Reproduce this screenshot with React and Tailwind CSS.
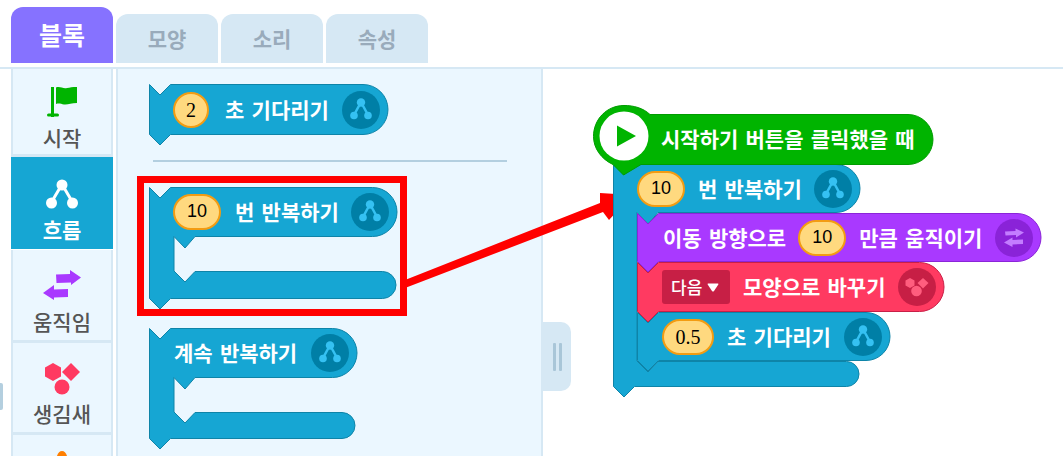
const KR = `font-['Noto_Sans_CJK_KR','Noto_Sans',sans-serif]`;

function stackPath(w, h) {
  const r = (h - 1) / 2;
  return `M.5 .5L11 11L21.5 .5H${w - r}A${r} ${r} 0 0 1 ${w - r} ${h - 0.5}H21.5L11 ${h + 10}L.5 ${h - 0.5}Z`;
}

function loopPath(w, head, ix, innerH, armW, armH) {
  const r = (head - 1) / 2;
  const a = (armH - 1) / 2;
  const ib = head + innerH;
  const ab = ib + armH;
  return `M.5 .5L11 11L21.5 .5H${w - r}A${r} ${r} 0 0 1 ${w - r} ${head - 0.5}H${ix + 21}L${ix + 11} ${head + 11}L${ix} ${head - 0.5}V${ib}L${ix + 11} ${ib + 11}L${ix + 21} ${ib + 0.5}H${armW - a}A${a} ${a} 0 0 1 ${armW - a} ${ab - 0.5}H21.5L11 ${ab + 10}L.5 ${ab - 0.5}Z`;
}

function BlockSvg({ d, fill, stroke, className = "" }) {
  return (
    <svg className={`absolute left-0 top-0 overflow-visible ${className}`} width="1" height="1">
      <path d={d} fill={fill} stroke={stroke} strokeWidth="1" strokeLinejoin="round" />
    </svg>
  );
}

function Pill({ children, w, serif }) {
  return (
    <span className={`flex h-[36px] items-center justify-center rounded-full border-2 border-[#f39c12] bg-[#ffd97f] text-black ${w} ${serif ? "font-['Liberation_Serif',serif] text-[20px]" : "font-['Liberation_Sans',sans-serif] text-[18px]"}`}>
      {children}
    </span>
  );
}

function Label({ children, className = "" }) {
  return (
    <span className={`whitespace-nowrap text-[21px] font-bold [word-spacing:2.5px] text-white ${className}`}>
      {children}
    </span>
  );
}

function FlowGlyph({ color = "#35c1f2", size = 38 }) {
  return (
    <svg width={size} height={size} viewBox="0 0 38 38">
      <path d="M18.5 12L12 24M19.5 12L26 24" stroke={color} strokeWidth="2.5" fill="none" />
      <circle cx="19" cy="11.5" r="4.2" fill={color} />
      <circle cx="12" cy="24.5" r="3.8" fill={color} />
      <circle cx="26" cy="24.5" r="3.8" fill={color} />
    </svg>
  );
}

function FlowIcon() {
  return (
    <span className="ml-auto mr-[8px] flex h-[38px] w-[38px] shrink-0 rounded-full bg-[#007fa6]">
      <FlowGlyph />
    </span>
  );
}

const WIDTHS = { "w-[239px]": 239, "w-[404px]": 404, "w-[307px]": 307, "w-[253px]": 253 };
const HEIGHTS = { "h-[51px]": 51, "h-[49px]": 49, "h-[50px]": 50 };

function Stack({ w, h, fill, stroke, z, children }) {
  return (
    <div className={`relative flex items-center ${w} ${h} ${z}`}>
      <BlockSvg d={stackPath(WIDTHS[w], HEIGHTS[h])} fill={fill} stroke={stroke} />
      <div className="relative flex w-full items-center">{children}</div>
    </div>
  );
}

function Loop({ w, h, d, head, children, inner }) {
  return (
    <div className={`relative ${w} ${h}`}>
      <div className="absolute left-[24px] top-[49px] flex flex-col">{inner}</div>
      <BlockSvg d={d} fill="#16a6d3" stroke="#0e84a8" />
      <div className={`relative flex w-full items-center ${head}`}>{children}</div>
    </div>
  );
}

function PanelBlocks() {
  return (
    <div className="flex flex-col pl-[31px] pt-[15px]">
      <Stack w="w-[239px]" h="h-[51px]" fill="#16a6d3" stroke="#0e84a8" z="">
        <span className="ml-[24px]"><Pill w="w-[36px]" serif>2</Pill></span>
        <Label className="ml-[16px]">초 기다리기</Label>
        <FlowIcon />
      </Stack>
      <div className="ml-[4px] mt-[25px] h-[1.5px] w-[354px] bg-[#b3cfe0]" />
      <div className="mt-[25px]">
        <Loop w="w-[248px]" h="h-[112px]" head="h-[50px]" d={loopPath(248, 50, 25, 34, 247, 28)}>
          <span className="ml-[24px]"><Pill w="w-[48px]">10</Pill></span>
          <Label className="ml-[14px]">번 반복하기</Label>
          <FlowIcon />
        </Loop>
      </div>
      <div className="mt-[29px]">
        <Loop w="w-[208px]" h="h-[111px]" head="h-[50px]" d={loopPath(208, 50, 25, 34, 206, 27)}>
          <Label className="ml-[25px]">계속 반복하기</Label>
          <FlowIcon />
        </Loop>
      </div>
    </div>
  );
}

function Script() {
  return (
    <div className="absolute left-[50px] top-[36px] flex w-[450px] flex-col">
      <div className="relative z-20 h-[59px] w-[340px]">
        <svg className="absolute left-0 top-0 overflow-visible" width="1" height="1">
          <path d="M31 .5C41 .5 50 3 57 9.5H315A25 25 0 0 1 315 59.5H48L30.5 70L20 59.5C8 54 .5 43 .5 31.5C.5 14 14 .5 31 .5Z" fill="#00b400" stroke="#009c00" />
          <circle cx="31" cy="31" r="24.5" fill="#fff" />
          <path d="M24 20.5L43 31L24 41.5Z" fill="#00b400" />
        </svg>
        <div className="relative flex h-[68px] items-center">
          <Label className="ml-[68px]">시작하기 버튼을 클릭했을 때</Label>
        </div>
      </div>
      <div className="relative z-10 ml-[20px]">
        <Loop
          w="w-[247px]"
          h="h-[223px]"
          head="h-[49px]"
          d={loopPath(247, 49, 24, 148, 246, 26)}
          inner={
            <>
              <Stack w="w-[404px]" h="h-[49px]" fill="#a939ff" stroke="#8b25d8" z="z-30">
                <Label className="ml-[26px]">이동 방향으로</Label>
                <span className="ml-[12px]"><Pill w="w-[48px]">10</Pill></span>
                <Label className="ml-[13px]">만큼 움직이기</Label>
                <span className="ml-auto mr-[8px] flex h-[38px] w-[38px] items-center justify-center rounded-full bg-[#8a23d8]">
                  <svg width="24" height="20" viewBox="0 0 24 20">
                    <path d="M3 3.5L13.5 3V.5L22 4.5L14 9.5V7L3.5 7.5ZM21 11.5L10.5 12V9.5L2 14.5L10.5 19V16.5L21 16Z" fill="#c37dff" />
                  </svg>
                </span>
              </Stack>
              <Stack w="w-[307px]" h="h-[50px]" fill="#ff3a61" stroke="#c91f47" z="z-20">
                <span className="ml-[25px] flex h-[34px] w-[68px] items-center rounded-[3px] bg-[#c71f45] pl-[9px] text-[17px] font-medium text-white">
                  다음
                  <svg className="ml-[5px]" width="12" height="9" viewBox="0 0 12 9">
                    <path d="M1 .5H11Q12 .5 11 2L7 8Q6 9 5 8L1 2Q0 .5 1 .5Z" fill="#fff" />
                  </svg>
                </span>
                <Label className="ml-[13px]">모양으로 바꾸기</Label>
                <span className="ml-auto mr-[8px] flex h-[38px] w-[38px] items-center justify-center rounded-full bg-[#c71f45]">
                  <svg width="26" height="24" viewBox="0 0 26 24">
                    <path d="M6 3L10.5 5.5V10.5L6 13L1.5 10.5V5.5Z" fill="#ff5d7e" />
                    <path d="M19 3L24.5 8L19 13.5L13.5 8Z" fill="#ff5d7e" />
                    <circle cx="12.5" cy="16" r="5.3" fill="#ff5d7e" />
                  </svg>
                </span>
              </Stack>
              <Stack w="w-[253px]" h="h-[49px]" fill="#16a6d3" stroke="#0e84a8" z="z-10">
                <span className="ml-[25px]"><Pill w="w-[52px]" serif>0.5</Pill></span>
                <Label className="ml-[13px]">초 기다리기</Label>
                <FlowIcon />
              </Stack>
            </>
          }
        >
          <span className="ml-[24px]"><Pill w="w-[48px]">10</Pill></span>
          <Label className="ml-[13px]">번 반복하기</Label>
          <FlowIcon />
        </Loop>
      </div>
    </div>
  );
}

function SideItem({ label, active, children, h }) {
  return (
    <div className={`flex flex-col items-center ${h} ${active ? "bg-[#16a6d3] text-white" : "border-x-2 border-b-[3px] border-[#d6e8f4] bg-[#ebf7ff] text-[#555]"}`}>
      {children}
      <span className={`text-[21px] leading-[28px] ${active ? "font-bold" : "font-medium"}`}>{label}</span>
    </div>
  );
}

function Tab({ children, active }) {
  return (
    <div className={`flex w-[102px] items-center justify-center rounded-t-[12px] font-bold ${active ? "h-[56px] bg-[#8672ff] text-[25px] text-white" : "h-[49px] bg-[#d6e8f4] text-[21px] text-[#99abbb]"}`}>
      {children}
    </div>
  );
}

export default function App() {
  return (
    <div className={`relative h-[456px] w-[1063px] overflow-hidden bg-white ${KR}`}>
      <div className="flex h-[63px] items-end gap-[3px] pl-[11px]">
        <Tab active>블록</Tab>
        <Tab>모양</Tab>
        <Tab>소리</Tab>
        <Tab>속성</Tab>
      </div>
      <div className="mt-[4px] flex h-[389px] border-t-2 border-[#d6e8f4] pl-[11px]">
        <div className="w-[102px] shrink-0">
          <SideItem label="시작" h="h-[88px]">
            <svg className="mt-[16px] mb-[6px]" width="32" height="32" viewBox="0 0 32 32">
              <rect x="5" y="2" width="3" height="30" fill="#00b400" />
              <rect x="1" y="28.5" width="12" height="3" rx="1.5" fill="#00b400" />
              <path d="M10 2.5C14 1 17 4 21 3C24 2.5 26 2 31 2V18C25 18 22 20 18 19.5C15 19 13 18 10 19Z" fill="#00b400" />
            </svg>
          </SideItem>
          <SideItem label="흐름" active h="h-[92px]">
            <svg className="mt-[18px] mb-[6px]" width="32" height="34" viewBox="0 0 32 34">
              <path d="M15 11L5 28M17 11L27 28" stroke="#fff" strokeWidth="3" fill="none" />
              <circle cx="16" cy="10" r="5.5" fill="#fff" />
              <circle cx="5.5" cy="28" r="5.5" fill="#fff" />
              <circle cx="26.5" cy="28" r="5.5" fill="#fff" />
            </svg>
          </SideItem>
          <div className="mt-[1px]">
            <SideItem label="움직임" h="h-[93px]">
              <svg className="mt-[20px] mb-[7px]" width="38" height="30" viewBox="0 0 38 30">
                <path d="M13 4.5L27 4V0L38 7.5L28 15V12.5L13.5 13ZM25 19L11 19.5V15L0 23L11 30V27.5L25 27Z" fill="#a939ff" />
              </svg>
            </SideItem>
          </div>
          <SideItem label="생김새" h="h-[92px]">
            <svg className="mt-[20px]" width="36" height="36" viewBox="0 0 36 36">
              <path d="M9 0L17 4.5V13.5L9 18L1 13.5V4.5Z" fill="#ff3a61" />
              <path d="M27 0L36 9L27 18L18 9Z" fill="#ff3a61" />
              <circle cx="18" cy="24" r="7.5" fill="#ff3a61" />
            </svg>
          </SideItem>
          <div className="flex h-[40px] flex-col items-center border-x-2 border-[#d6e8f4] bg-[#ebf7ff]">
            <svg className="mt-[15px]" width="12" height="10" viewBox="0 0 12 10">
              <path d="M6 1C9 1 11 4 12 10H0C1 4 3 1 6 1Z" fill="#ff7f00" />
            </svg>
          </div>
        </div>
        <div className="relative ml-[3px] h-full w-[427px] shrink-0 overflow-hidden border-x-2 border-[#d6e8f4] bg-[#ebf7ff]">
          <PanelBlocks />
        </div>
        <div className="relative flex-1">
          <div className="absolute left-0 top-[253px] flex h-[69px] w-[28px] items-center justify-center gap-[3px] rounded-r-[10px] bg-[#d6e8f4]">
            <span className="h-[28px] w-[3px] rounded-[1px] bg-[#a9c6d8]" />
            <span className="h-[28px] w-[3px] rounded-[1px] bg-[#a9c6d8]" />
          </div>
          <Script />
        </div>
      </div>
      <span className="absolute left-0 top-[383px] h-[27px] w-[3px] rounded-r-[2px] bg-[#b4cfdf]" />
      <div className="absolute left-[137px] top-[176px] h-[140px] w-[270px] border-[7px] border-[#ff0000]" />
      <svg className="absolute left-[400px] top-[185px]" width="240" height="110" viewBox="0 0 240 110">
        <path d="M5 95L200 18L200 8L232 10L209 35L203 27L5 103Z" fill="#ff0000" />
      </svg>
    </div>
  );
}
